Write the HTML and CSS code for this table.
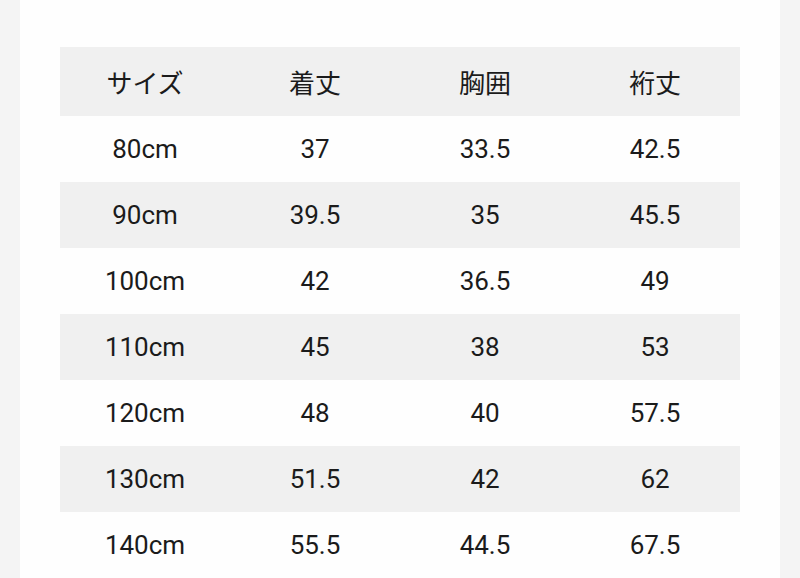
FILE: index.html
```html
<!DOCTYPE html>
<html lang="ja">
<head>
<meta charset="utf-8">
<link rel="stylesheet" href="styles.css">
</head>
<body>
<div class="page">
  <table class="size-table">
    <thead>
      <tr><th>サイズ</th><th>着丈</th><th>胸囲</th><th>裄丈</th></tr>
    </thead>
    <tbody>
      <tr><td>80cm</td><td>37</td><td>33.5</td><td>42.5</td></tr>
      <tr><td>90cm</td><td>39.5</td><td>35</td><td>45.5</td></tr>
      <tr><td>100cm</td><td>42</td><td>36.5</td><td>49</td></tr>
      <tr><td>110cm</td><td>45</td><td>38</td><td>53</td></tr>
      <tr><td>120cm</td><td>48</td><td>40</td><td>57.5</td></tr>
      <tr><td>130cm</td><td>51.5</td><td>42</td><td>62</td></tr>
      <tr><td>140cm</td><td>55.5</td><td>44.5</td><td>67.5</td></tr>
    </tbody>
  </table>
</div>
</body>
</html>
```

FILE: styles.css
```css
html, body {
  margin: 0;
  padding: 0;
  background: #f4f4f4;
  height: 578px;
  overflow: hidden;
}
.page {
  margin: 0 20px;
  background: #fefefe;
  height: 578px;
  padding: 47px 40px 0;
  box-sizing: border-box;
}
.size-table {
  width: 680px;
  border-collapse: collapse;
  table-layout: fixed;
  font-family: Roboto, "Noto Sans CJK JP", sans-serif;
  font-size: 26px;
  color: #1b1b1b;
}
.size-table th,
.size-table td {
  text-align: center;
  padding: 0;
  font-weight: 400;
}
.size-table th {
  height: 69px;
  background: #f0f0f0;
}
.size-table td {
  height: 66px;
}
.size-table tbody tr:nth-child(even) td {
  background: #f0f0f0;
}
```
